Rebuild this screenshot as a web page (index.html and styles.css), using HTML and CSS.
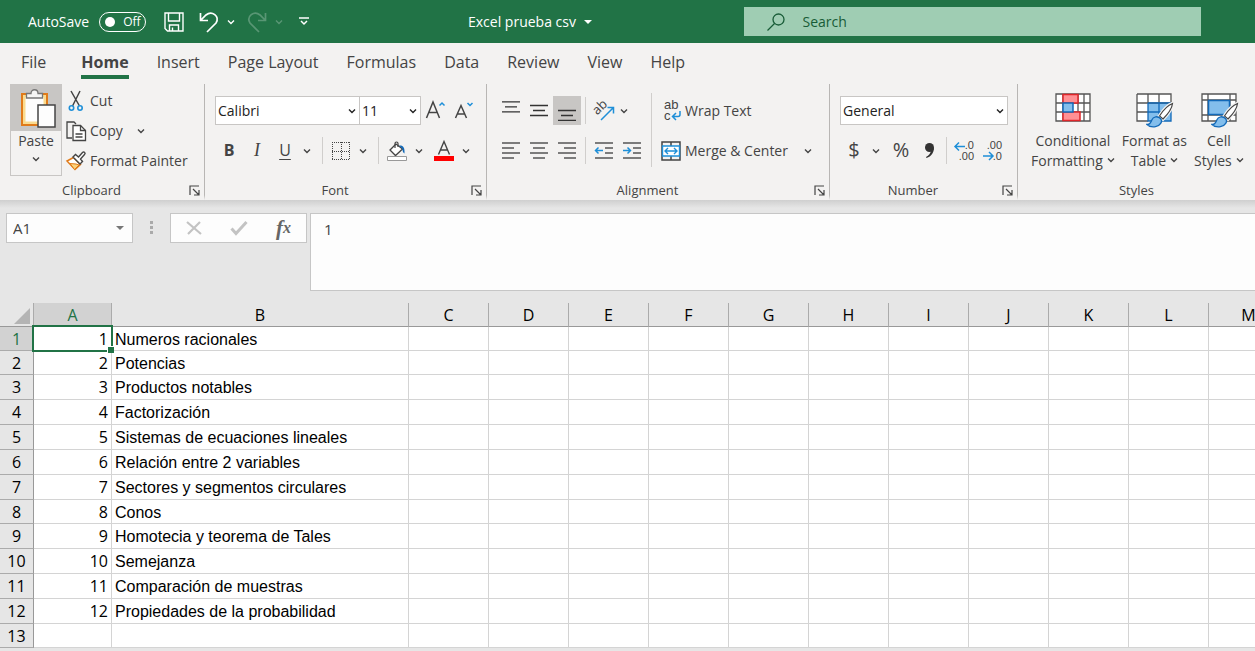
FILE: index.html
```html
<!DOCTYPE html>
<html lang="en">
<head>
    <meta charset="UTF-8">
    <meta name="viewport" content="width=device-width, initial-scale=1.0">
    <title>Excel prueba csv</title>
    <link rel="stylesheet" href="styles.css">
</head>
<body>
    <svg class="defs" aria-hidden="true">
        <symbol id="chevron" viewBox="0 0 8 8"><path d="M1 2.5l3 3 3-3" fill="none" stroke="currentColor" stroke-width="1.4"/></symbol>
        <symbol id="launcher" viewBox="0 0 11 11"><path d="M1 10V1h9M4 4l5.500 5.500M10 5v5H5" fill="none" stroke="currentColor" stroke-width="1.200"/></symbol>
        <symbol id="brush" viewBox="0 0 28 26">
            <path d="M26.500 1.500c-4 1.500-9.500 7-13 12.500l3.500 3c4-4 9-10.500 9.500-15.500z" fill="#fff" stroke="#f3f2f1" stroke-width="3.500"/>
            <path d="M26.500 1.500c-4 1.500-9.500 7-13 12.500l3.500 3c4-4 9-10.500 9.500-15.500z" fill="#fff" stroke="#444" stroke-width="1.200"/>
            <path d="M1 22.500c3 .3 3.800-1.600 4.800-4.500 1.400-3.800 6-4.200 8.700-1.500 2.500 3-.3 7.500-5 8.200-3.300.5-6.500-.2-8.500-2.200z" fill="#83beec" stroke="#1269b8" stroke-width="1.300"/>
        </symbol>
    </svg>

    <header class="titlebar">
        <div class="quick">
            <label class="autosave">AutoSave
                <span class="switch"><input type="checkbox"><span>Off</span></span>
            </label>
            <button class="save" aria-label="Save">
                <svg width="20" height="20" viewBox="0 0 20 20" fill="none" stroke="currentColor" stroke-width="1.4"><path d="M1 1h18v18H3.500L1 16.500zM4.500 1v8h11V1M5.500 19v-6h9v6M8.500 15.500V19"/></svg>
            </button>
            <button aria-label="Undo">
                <svg width="20" height="22" viewBox="0 0 20 22" fill="none" stroke="currentColor" stroke-width="1.700"><path d="M1.500 2v7.500H9M1.500 9.500L7 4c6-5 14 1.500 10 8l-9 9"/></svg>
            </button>
            <button class="drop" aria-label="Undo list"><svg class="chev"><use href="#chevron"/></svg></button>
            <button class="faded" aria-label="Redo">
                <svg width="20" height="22" viewBox="0 0 20 22" fill="none" stroke="currentColor" stroke-width="1.700"><path d="M18.500 2v7.500H11M18.500 9.500L13 4C7-1-1 5.500 3 12l9 9"/></svg>
            </button>
            <button class="drop faded" aria-label="Redo list"><svg class="chev"><use href="#chevron"/></svg></button>
            <button class="customize" aria-label="Customize toolbar">
                <svg width="10" height="9" viewBox="0 0 10 9" fill="none" stroke="currentColor" stroke-width="1.500"><path d="M0 1h10M2 4l3 3 3-3"/></svg>
            </button>
        </div>
        <button class="doc-name">Excel prueba csv
            <svg width="8" height="4" viewBox="0 0 8 4"><path d="M0 0h8L4 4z" fill="currentColor"/></svg>
        </button>
        <label class="search">
            <svg width="18" height="18" viewBox="0 0 18 18" fill="none" stroke="currentColor" stroke-width="1.300"><circle cx="11.500" cy="6.500" r="5.500"/><path d="M7.500 10.500L.5 17.500"/></svg>
            <input type="text" placeholder="Search" aria-label="Search">
        </label>
    </header>

    <nav class="tabs">
        <a class="file" href="#">File</a>
        <a class="active" href="#">Home</a>
        <a href="#">Insert</a>
        <a href="#">Page Layout</a>
        <a href="#">Formulas</a>
        <a href="#">Data</a>
        <a href="#">Review</a>
        <a href="#">View</a>
        <a href="#">Help</a>
    </nav>

    <div class="ribbon">
        <section class="group clipboard">
            <div class="tools">
                <button class="paste">
                    <span class="paste-icon">
                        <svg width="36" height="40" viewBox="0 0 36 40">
                            <path d="M2 6h25v31H2z" fill="#fadb8f" stroke="#e07b1a" stroke-width="2"/>
                            <path d="M5.500 9h18v24.500h-18z" fill="#fdfdfd"/>
                            <path d="M6.500 10V5.500h4.500c0-5 7-5 7 0h4.500V10z" fill="#f5f5f5" stroke="#777" stroke-width="1.300"/>
                            <path d="M18 17h17v22H18z" fill="#fdfdfd" stroke="#444" stroke-width="1.500"/>
                        </svg>
                    </span>
                    <span>Paste</span>
                    <svg class="chev"><use href="#chevron"/></svg>
                </button>
                <div class="clip-list">
                    <button>
                        <svg width="20" height="20" viewBox="0 0 20 20" fill="none"><path d="M5 0l8.500 15M14 0L6.500 15" stroke="#444" stroke-width="1.500"/><circle cx="5.500" cy="17" r="2.200" stroke="#1e8fd8" stroke-width="1.600"/><circle cx="14" cy="17" r="2.200" stroke="#1e8fd8" stroke-width="1.600"/></svg>
                        Cut
                    </button>
                    <button>
                        <svg width="20" height="20" viewBox="0 0 20 20" fill="none" stroke="#444" stroke-width="1.300"><path d="M6 17H1V1h7l2 2"/><path d="M7 4.500h7.500l5 5v10H7z" fill="#fff"/><path d="M14.500 4.500v5h5M9.500 13h7M9.500 16h7"/></svg>
                        Copy
                        <svg class="chev"><use href="#chevron"/></svg>
                    </button>
                    <button>
                        <svg width="20" height="20" viewBox="0 0 20 20"><path d="M7.500 6.500L1 10l8 8.500 5.500-5z" fill="#fff" stroke="#e07b1a" stroke-width="1.500"/><path d="M4 12.500l6 .5 3 1-4.500 4.500z" fill="#fbd27b" stroke="#e07b1a"/><path d="M7 6l2.500-2.500 3 2.500 4-4.500c1.500-1.500 3.500.5 2 2l-4 4.500 2 2.500-2.500 2.500z" fill="#fff" stroke="#444" stroke-width="1.400"/></svg>
                        Format Painter
                    </button>
                </div>
            </div>
            <footer><span>Clipboard</span><button aria-label="Clipboard options"><svg class="launch"><use href="#launcher"/></svg></button></footer>
        </section>

        <section class="group font">
            <div class="tools rows">
                <div class="row">
                    <div class="combo family"><select aria-label="Font"><option>Calibri</option></select><svg class="chev"><use href="#chevron"/></svg></div>
                    <div class="combo size"><select aria-label="Font size"><option>11</option></select><svg class="chev"><use href="#chevron"/></svg></div>
                    <button class="icon" aria-label="Increase font size"><svg width="20" height="20" viewBox="0 0 20 20" fill="none"><path d="M1.500 17L8 1l6.500 16M4 11.500h8" stroke="#444" stroke-width="1.500"/><path d="M14.500 4.500L17 2l2.500 2.500" stroke="#1e8fd8" stroke-width="1.500"/></svg></button>
                    <button class="icon" aria-label="Decrease font size"><svg width="20" height="20" viewBox="0 0 20 20" fill="none"><path d="M2.500 17L8 4.500 13.500 17M4.500 13h7" stroke="#444" stroke-width="1.500"/><path d="M14.500 2L17 4.500 19.500 2" stroke="#1e8fd8" stroke-width="1.500"/></svg></button>
                </div>
                <div class="row">
                    <button class="icon bold">B</button>
                    <button class="icon italic">I</button>
                    <button class="icon underline">U</button>
                    <button class="drop" aria-label="Underline styles"><svg class="chev"><use href="#chevron"/></svg></button>
                    <i class="sep"></i>
                    <button class="icon" aria-label="Borders"><svg width="20" height="20" viewBox="0 0 20 20" fill="none" stroke="#444"><path d="M1 1.500h18M1 10.500h18M1.500 1v18M10.500 1v18M18.500 1v18" stroke-dasharray="1 1"/><path d="M1 18.500h18" stroke-dasharray="1 1"/></svg></button>
                    <button class="drop" aria-label="Border styles"><svg class="chev"><use href="#chevron"/></svg></button>
                    <i class="sep"></i>
                    <button class="icon" aria-label="Fill color"><svg width="20" height="20" viewBox="0 0 20 20" fill="none"><path d="M9 3L3 9l5.500 5.500 7-6.500z" fill="#fff" stroke="#444" stroke-width="1.300"/><path d="M8 7V2.500c0-2 3-2 3 0V6" stroke="#444" stroke-width="1.200"/><path d="M12 4.500c4-.5 6 2 5.500 8-1.500-1-2-2.500-2-4.500z" fill="#1269b8"/><path d="M.5 15.500h19v4H.5z" fill="#fff" stroke="#999"/></svg></button>
                    <button class="drop" aria-label="Fill colors"><svg class="chev"><use href="#chevron"/></svg></button>
                    <button class="icon color" aria-label="Font color"><svg width="20" height="20" viewBox="0 0 20 20" fill="none"><path d="M4.500 13.500L10 .5l5.500 13M6.500 9h7" stroke="#444" stroke-width="1.400"/><path d="M0 15h20v5H0z" fill="#f00"/></svg></button>
                    <button class="drop" aria-label="Font colors"><svg class="chev"><use href="#chevron"/></svg></button>
                </div>
            </div>
            <footer><span>Font</span><button aria-label="Font options"><svg class="launch"><use href="#launcher"/></svg></button></footer>
        </section>

        <section class="group alignment">
            <div class="tools">
                <div class="rows">
                    <div class="row">
                        <button class="icon" aria-label="Top align"><svg width="20" height="20" viewBox="0 0 20 20" stroke="#333" stroke-width="1.300"><path d="M1 .8h18M4 5.800h12M1 10.800h18"/></svg></button>
                        <button class="icon" aria-label="Middle align"><svg width="20" height="20" viewBox="0 0 20 20" stroke="#333" stroke-width="1.300"><path d="M1 4.500h18M4 9.500h12M1 14.500h18"/></svg></button>
                        <button class="icon pressed" aria-label="Bottom align"><svg width="20" height="20" viewBox="0 0 20 20" stroke="#333" stroke-width="1.300"><path d="M1 9.500h18M4 14.500h12M1 19.300h18"/></svg></button>
                        <i class="sep tight"></i>
                        <button class="icon" aria-label="Orientation"><svg width="20" height="20" viewBox="0 0 20 20"><text x="1" y="13" transform="rotate(-45 4 11)" font-size="13" fill="#444">ab</text><path d="M7 19L19 7M13.500 6.500H19.500V12.500" fill="none" stroke="#1e8fd8" stroke-width="1.500"/></svg></button>
                        <button class="drop narrow" aria-label="Orientation list"><svg class="chev"><use href="#chevron"/></svg></button>
                    </div>
                    <div class="row">
                        <button class="icon" aria-label="Align left"><svg width="20" height="20" viewBox="0 0 20 20" stroke="#555" stroke-width="1.500"><path d="M1 2h18M1 7h12M1 12h18M1 17h12"/></svg></button>
                        <button class="icon" aria-label="Center"><svg width="20" height="20" viewBox="0 0 20 20" stroke="#555" stroke-width="1.500"><path d="M1 2h18M4 7h12M1 12h18M4 17h12"/></svg></button>
                        <button class="icon" aria-label="Align right"><svg width="20" height="20" viewBox="0 0 20 20" stroke="#555" stroke-width="1.500"><path d="M1 2h18M7 7h12M1 12h18M7 17h12"/></svg></button>
                        <i class="sep tight"></i>
                        <button class="icon" aria-label="Decrease indent"><svg width="20" height="20" viewBox="0 0 20 20" fill="none" stroke="#555" stroke-width="1.500"><path d="M1 2h18M11 7h8M11 12h8M1 17h18"/><path d="M9 9.500H1.500M4.500 6.500l-3 3 3 3" stroke="#1e8fd8"/></svg></button>
                        <button class="icon" aria-label="Increase indent"><svg width="20" height="20" viewBox="0 0 20 20" fill="none" stroke="#555" stroke-width="1.500"><path d="M1 2h18M11 7h8M11 12h8M1 17h18"/><path d="M1 9.500h7.500M5.500 6.500l3 3-3 3" stroke="#1e8fd8"/></svg></button>
                    </div>
                </div>
                <i class="sep tall"></i>
                <div class="rows">
                    <button class="row wide">
                        <svg class="glyphs" width="20" height="20" viewBox="0 0 20 20"><text x="3" y="8" font-size="13">ab</text><text x="3" y="19" font-size="13">c</text><path d="M19 10v3.500c0 1.500-1 2-2 2h-5M15 12l-3.500 3.500L15 19" fill="none" stroke="#1e8fd8" stroke-width="1.500"/></svg>
                        Wrap Text
                    </button>
                    <button class="row wide">
                        <svg width="20" height="20" viewBox="0 0 20 20" fill="none"><path d="M1 1h18v18H1zM10 1v4M10 15v4" stroke="#444" stroke-width="1.500"/><path d="M1.500 5h17v10h-17z" fill="#fff" stroke="#1e8fd8" stroke-width="1.400"/><path d="M4 10h12M7 7l-3 3 3 3M13 7l3 3-3 3" stroke="#1e8fd8" stroke-width="1.400"/></svg>
                        Merge &amp; Center
                        <svg class="chev"><use href="#chevron"/></svg>
                    </button>
                </div>
            </div>
            <footer><span>Alignment</span><button aria-label="Alignment options"><svg class="launch"><use href="#launcher"/></svg></button></footer>
        </section>

        <section class="group number">
            <div class="tools rows">
                <div class="row">
                    <div class="combo format"><select aria-label="Number format"><option>General</option></select><svg class="chev"><use href="#chevron"/></svg></div>
                </div>
                <div class="row">
                    <button class="icon symbol">$</button>
                    <button class="drop" aria-label="Currencies"><svg class="chev"><use href="#chevron"/></svg></button>
                    <button class="icon symbol">%</button>
                    <button class="icon" aria-label="Comma style"><svg width="20" height="20" viewBox="0 0 20 20"><circle cx="10.500" cy="6.500" r="4.500" fill="#333"/><path d="M15 6.500c0 5-2.500 9-7.500 10.500l-.5-1c3-1.500 4.500-3.500 5-6.500z" fill="#333"/></svg></button>
                    <i class="sep"></i>
                    <button class="icon" aria-label="Increase decimal"><svg class="glyphs" width="20" height="20" viewBox="0 0 20 20"><text x="20" y="8" text-anchor="end" font-size="11">.0</text><text x="20" y="19" text-anchor="end" font-size="11">.00</text><path d="M11 5.500H1M5 1.500l-4 4 4 4" fill="none" stroke="#1e8fd8" stroke-width="1.500"/></svg></button>
                    <button class="icon" aria-label="Decrease decimal"><svg class="glyphs" width="20" height="20" viewBox="0 0 20 20"><text x="20" y="8" text-anchor="end" font-size="11">.00</text><text x="20" y="19" text-anchor="end" font-size="11">.0</text><path d="M1 15h10M7 11l4 4-4 4" fill="none" stroke="#1e8fd8" stroke-width="1.500"/></svg></button>
                </div>
            </div>
            <footer><span>Number</span><button aria-label="Number options"><svg class="launch"><use href="#launcher"/></svg></button></footer>
        </section>

        <section class="group styles">
            <div class="tools">
                <button class="big">
                    <svg width="40" height="36" viewBox="0 0 40 36"><path d="M3 1h34v27H3zM3 10h34M3 19h34M10 1v27M31 1v27M25 1v27" fill="#fff" stroke="#555" stroke-width="1.300"/><path d="M10 1.500h15v8.500H10zM10 19h17v8.500H10z" fill="#ff9094" stroke="#e0262a" stroke-width="1.500"/><path d="M10 10h10v9H10z" fill="#83beec" stroke="#1269b8" stroke-width="1.500"/></svg>
                    Conditional
                    <span>Formatting <svg class="chev"><use href="#chevron"/></svg></span>
                </button>
                <button class="big">
                    <svg width="40" height="36" viewBox="0 0 40 36"><path d="M3 1h34v27H3z" fill="#fff"/><path d="M14 10h23v18H14z" fill="#83beec"/><path d="M3 1h34v9M3 1v27h11M3 10h34M3 19h11M14 1v9M25 1v9" fill="none" stroke="#555" stroke-width="1.300"/><path d="M14 10v18h23V10M14 19h23M25 10v18M14 10h23" fill="none" stroke="#1269b8" stroke-width="1.300"/><use href="#brush" x="12" y="9" width="28" height="26"/></svg>
                    Format as
                    <span>Table <svg class="chev"><use href="#chevron"/></svg></span>
                </button>
                <button class="big">
                    <svg width="40" height="36" viewBox="0 0 40 36"><path d="M3 1h34v27H3zM3 7h34M3 22h34M9 1v27M31 1v27" fill="#fff" stroke="#555" stroke-width="1.300"/><path d="M9.500 7.500h21v14h-21z" fill="#83beec" stroke="#1269b8" stroke-width="1.500"/><use href="#brush" x="12" y="9" width="28" height="26"/></svg>
                    Cell
                    <span>Styles <svg class="chev"><use href="#chevron"/></svg></span>
                </button>
            </div>
            <footer><span>Styles</span></footer>
        </section>
    </div>

    <div class="formula-bar">
        <div class="name-box">
            <input type="text" value="A1" aria-label="Name box">
            <svg width="8" height="4" viewBox="0 0 8 4"><path d="M0 0h8L4 4z" fill="#777"/></svg>
        </div>
        <svg class="grip" width="3" height="13" viewBox="0 0 3 13" fill="#aaa"><path d="M0 0h3v3H0zM0 5h3v3H0zM0 10h3v3H0z"/></svg>
        <div class="entry">
            <button aria-label="Cancel"><svg width="16" height="16" viewBox="0 0 16 16"><path d="M1 2l14 12M14 2L2 14" stroke="#c3c3c3" stroke-width="2.200"/></svg></button>
            <button aria-label="Enter"><svg width="18" height="16" viewBox="0 0 18 16"><path d="M1.500 8.500l4.500 5L16.500 2" fill="none" stroke="#c3c3c3" stroke-width="3"/></svg></button>
            <button class="fx" aria-label="Insert function">f<sub>x</sub></button>
        </div>
        <textarea aria-label="Formula bar">1</textarea>
    </div>

    <main class="sheet">
        <table>
            <colgroup id="cols"></colgroup>
            <thead><tr id="letters"></tr></thead>
            <tbody id="cells"></tbody>
        </table>
    </main>

    <script>
        const topics = [
            'Numeros racionales',
            'Potencias',
            'Productos notables',
            'Factorización',
            'Sistemas de ecuaciones lineales',
            'Relación entre 2 variables',
            'Sectores y segmentos circulares',
            'Conos',
            'Homotecia y teorema de Tales',
            'Semejanza',
            'Comparación de muestras',
            'Propiedades de la probabilidad'
        ];
        const shortRows = [1, 2, 8, 13];

        // enough columns and rows to fill the window
        const columnCount = Math.min(26, 2 + Math.ceil((window.innerWidth - 409) / 80));
        const rowCount = Math.max(13, Math.ceil((window.innerHeight - 326) / 25));

        let cols = '<col class="col-head"><col class="col-a"><col class="col-b">';
        let letters = '<th class="corner"><svg width="16" height="16" viewBox="0 0 16 16"><path d="M16 0v16H0z" fill="#b4b4b4"/></svg></th>';
        for (let c = 0; c < columnCount; c++) {
            if (c > 1) cols += '<col class="col-empty">';
            letters += `<th scope="col"${c === 0 ? ' class="selected"' : ''}>${String.fromCharCode(65 + c)}</th>`;
        }
        document.getElementById('cols').innerHTML = cols;
        document.getElementById('letters').innerHTML = letters;

        let rows = '';
        for (let r = 1; r <= rowCount; r++) {
            const topic = topics[r - 1];
            rows += `<tr${shortRows.includes(r) ? ' class="short"' : ''}>`;
            rows += `<th scope="row"${r === 1 ? ' class="selected"' : ''}>${r}</th>`;
            rows += `<td class="num${r === 1 ? ' current' : ''}">${topic ? r : ''}</td><td>${topic || ''}</td>`;
            rows += '<td></td>'.repeat(columnCount - 2) + '</tr>';
        }
        document.getElementById('cells').innerHTML = rows;
    </script>
</body>
</html>
```
FILE: styles.css
```css
* {
    box-sizing: border-box;
}
body {
    margin: 0;
    height: 100vh;
    display: flex;
    flex-direction: column;
    overflow: hidden;
    font-family: 'Open Sans', 'Noto Sans', sans-serif;
    font-size: 14px;
    line-height: 20px;
    color: #444;
    background: #e6e6e6;
}
button, input, select, textarea {
    font: inherit;
    color: inherit;
    margin: 0;
    padding: 0;
    border: none;
    border-radius: 0;
    background: none;
}
button {
    display: flex;
    align-items: center;
    justify-content: center;
    white-space: nowrap;
    cursor: pointer;
}
svg {
    flex: none;
    display: block;
    overflow: visible;
}
.defs {
    display: none;
}
.chev {
    width: 8px;
    height: 8px;
}
.launch {
    width: 11px;
    height: 11px;
}
.glyphs {
    font-family: 'Liberation Sans', Arial, sans-serif;
    fill: #444;
}

/* title bar */
.titlebar {
    flex: none;
    display: flex;
    align-items: center;
    height: 43px;
    padding: 0 54px 0 28px;
    color: #fff;
    background: #217346;
}
.quick {
    display: flex;
    align-items: center;
    width: 440px;
}
.autosave, .switch {
    display: flex;
    align-items: center;
}
.autosave {
    gap: 10px;
    margin-right: 18px;
}
.switch {
    gap: 8px;
    width: 47px;
    height: 20px;
    padding-left: 5px;
    border: 1px solid #fff;
    border-radius: 10px;
    font-size: 12px;
}
.switch input {
    appearance: none;
    width: 10px;
    height: 10px;
    border-radius: 50%;
    background: #fff;
}
.save {
    margin-right: 15px;
}
.drop {
    width: 16px;
    height: 28px;
}
.drop.narrow {
    width: 12px;
}
.titlebar .drop {
    width: 24px;
    margin-right: 4px;
}
.faded {
    opacity: 0.25;
}
.customize {
    margin-left: 4px;
}
.doc-name {
    gap: 8px;
}
.search {
    display: flex;
    align-items: center;
    gap: 18px;
    width: 39%;
    height: 29px;
    margin-left: auto;
    padding-left: 23px;
    color: #185c37;
    background: #9fcdb3;
}
.search input {
    flex: 1;
    min-width: 0;
}
.search input::placeholder {
    color: #185c37;
    opacity: 1;
}

/* tabs */
.tabs {
    flex: none;
    display: flex;
    gap: 28px;
    height: 41px;
    padding: 7px 21px 0;
    font-size: 16px;
    line-height: 25px;
    background: #f3f2f1;
}
.tabs a {
    color: #444;
    text-decoration: none;
    white-space: nowrap;
}
.tabs .file {
    margin-right: 7px;
}
.tabs .active {
    height: 29px;
    border-bottom: 4px solid #217346;
    font-weight: bold;
}

/* ribbon */
.ribbon {
    flex: none;
    display: flex;
    background: #f3f2f1;
}
.group {
    display: flex;
    flex: none;
    flex-direction: column;
    justify-content: space-between;
    height: 116px;
    padding-left: 10px;
    border-right: 1px solid #b8b6b4;
    border-bottom: 5px solid #f3f2f1;
}
.tools {
    display: flex;
}
.group footer {
    display: flex;
    align-items: center;
    gap: 6px;
    height: 20px;
    margin: 0 4px -5px -10px;
    font-size: 13px;
}
.group footer span {
    flex: 1;
    text-align: center;
}
.clipboard {
    width: 205px;
}
.font {
    width: 282px;
}
.alignment {
    width: 343px;
}
.number {
    width: 188px;
}
.styles {
    flex: 1;
    border-right: none;
}
.styles footer {
    margin-right: 0;
}
.paste {
    flex-direction: column;
    justify-content: flex-start;
    width: 52px;
    height: 92px;
    border: 1px solid #c8c6c4;
}
.paste-icon {
    display: flex;
    justify-content: center;
    align-items: center;
    align-self: stretch;
    height: 46px;
    padding-left: 4px;
    background: #c8c6c4;
}
.paste .chev {
    margin-top: 4px;
}
.clip-list {
    display: flex;
    flex-direction: column;
    align-items: flex-start;
    padding: 2px 0 0 4px;
}
.clip-list button {
    gap: 4px;
    height: 30px;
}
.clip-list .chev {
    margin-left: 10px;
}
.rows {
    display: flex;
    flex-direction: column;
    gap: 11px;
    padding-top: 12px;
}
.row {
    display: flex;
    align-items: center;
    height: 29px;
}
.icon {
    width: 28px;
    height: 29px;
    font-size: 16px;
}
.pressed {
    background: #c8c6c4;
}
.sep {
    width: 1px;
    height: 27px;
    margin: 0 4px 0 7px;
    background: #d0cecc;
}
.sep.tight {
    margin-left: 4px;
}
.sep.tall {
    height: 74px;
    margin: 9px 9px 0 5px;
}
.bold {
    font-weight: bold;
}
.italic {
    font-family: 'Liberation Serif', serif;
    font-size: 18px;
    font-style: italic;
}
.underline {
    text-decoration: underline;
    text-underline-offset: 3px;
}
.bold, .italic, .underline, .symbol {
    padding-bottom: 2px;
}
.color {
    margin-left: 3px;
}
.combo {
    display: grid;
    align-items: center;
    height: 29px;
    border: 1px solid #c8c6c4;
    color: #222;
    background: #fff;
}
.combo select, .combo svg {
    grid-area: 1 / 1;
}
.combo select {
    appearance: none;
    width: 100%;
    padding-left: 2px;
}
.combo svg {
    justify-self: end;
    margin-right: 3px;
    pointer-events: none;
}
.family {
    width: 145px;
}
.size {
    width: 62px;
    margin-left: -1px;
}
.format {
    width: 168px;
}
.wide {
    gap: 4px;
    justify-content: flex-start;
}
.wide .chev {
    margin-left: 12px;
}
.symbol {
    font-size: 20px;
}
.number .drop {
    margin-right: 3px;
}
.number .sep {
    margin: 0 3px;
}
.styles .tools {
    gap: 3px;
    padding: 9px 0 0 1px;
}
.big {
    flex-direction: column;
    padding: 0 2px;
}
.big svg:first-child {
    margin-bottom: 2px;
}
.big span {
    display: flex;
    align-items: center;
    gap: 4px;
}

/* formula bar */
.formula-bar {
    flex: none;
    display: flex;
    align-items: flex-start;
    padding: 13px 0 12px 6px;
    font-size: 15px;
    background: linear-gradient(#cfcfcf, #e6e6e6 8px);
}
.name-box, .entry {
    display: flex;
    align-items: center;
    height: 30px;
    border: 1px solid #c6c6c6;
    background: #fdfdfd;
}
.name-box {
    width: 127px;
    padding: 0 8px 0 6px;
}
.name-box input {
    flex: 1;
    min-width: 0;
}
.grip {
    margin: 8px 17px 0;
}
.entry {
    width: 137px;
    margin-right: 3px;
}
.entry button {
    flex: 1;
}
.fx {
    font-family: 'Liberation Serif', serif;
    font-size: 21px;
    font-style: italic;
    font-weight: bold;
    color: #666;
}
.fx sub {
    font-size: 16px;
}
.formula-bar textarea {
    flex: 1;
    height: 78px;
    padding: 5px 13px;
    border: 1px solid #c6c6c6;
    border-right: none;
    background: #fdfdfd;
    resize: none;
}

/* grid */
.sheet {
    flex: 1;
    min-height: 0;
    overflow: hidden;
    color: #000;
}
table {
    width: 0;
    table-layout: fixed;
    border-collapse: separate;
    border-spacing: 0;
    font-size: 16px;
}
.col-head {
    width: 34px;
}
.col-a {
    width: 78px;
}
.col-b {
    width: 297px;
}
.col-empty {
    width: 80px;
}
th, td {
    height: 25px;
    padding: 2px 3px 0;
    border-right: 1px solid #d4d4d4;
    border-bottom: 1px solid #d4d4d4;
    line-height: 20px;
    white-space: nowrap;
}
.short th, .short td {
    height: 24px;
}
td {
    font-family: 'Liberation Sans', Arial, sans-serif;
    background: #fff;
}
th {
    padding: 0;
    border-color: #ababab;
    font-weight: normal;
    background: #e6e6e6;
}
thead th {
    height: 24px;
    border-bottom-color: #999;
}
tbody th {
    border-right-color: #999;
}
.corner svg {
    margin: 2px 0 0 14px;
}
th.selected {
    color: #217346;
    background: #d2d2d2;
}
.num {
    padding-top: 0;
    font-family: 'Open Sans', 'Noto Sans', sans-serif;
    text-align: right;
}
.current {
    position: relative;
}
.current::before {
    content: '';
    position: absolute;
    inset: -2px;
    border: 2px solid #217346;
}
.current::after {
    content: '';
    position: absolute;
    right: -3px;
    bottom: -3px;
    width: 6px;
    height: 6px;
    border: solid #fff;
    border-width: 1px 0 0 1px;
    background: #217346;
}
```
